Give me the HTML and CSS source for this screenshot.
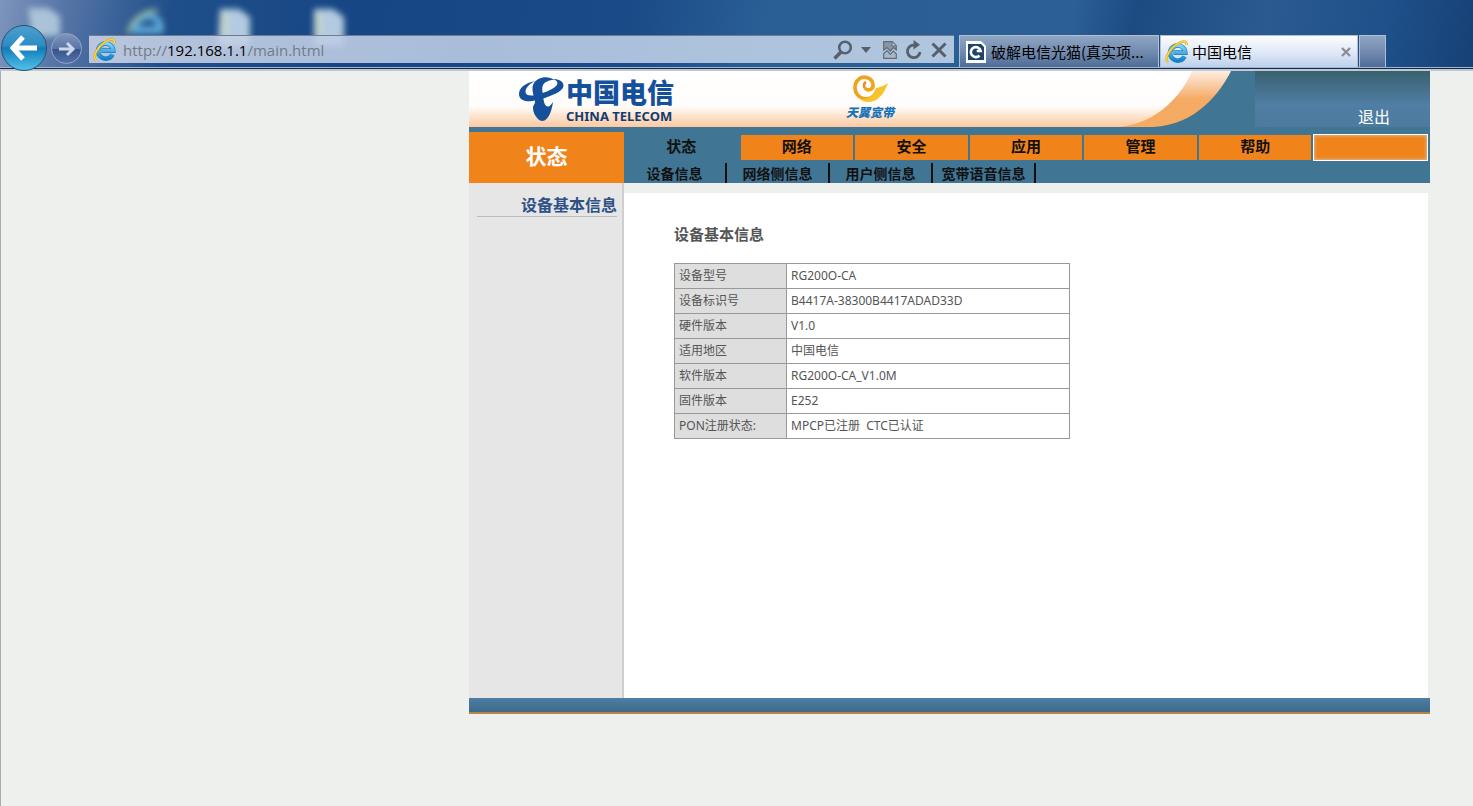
FILE: index.html
```html
<!DOCTYPE html>
<html lang="zh-CN">
<head>
<meta charset="utf-8">
<title>中国电信</title>
<link rel="stylesheet" href="styles.css">
</head>
<body>
<svg class="defs" width="0" height="0" aria-hidden="true">
  <defs>
    <linearGradient id="ie-blue" x1="0" y1="0" x2="0" y2="1"><stop offset="0" stop-color="#7fd6f7"/><stop offset="1" stop-color="#1583c9"/></linearGradient>
    <symbol id="ie" viewBox="0 0 24 24">
      <path d="M19.500 16.500A7.600 7.600 0 1 1 20.300 12.600H8.500" fill="none" stroke="#1b7fbf" stroke-width="4.600"/>
      <path d="M19.500 16.500A7.600 7.600 0 1 1 20.300 12.600H8.500" fill="none" stroke="url(#ie-blue)" stroke-width="3.200"/>
      <path d="M3 22.500C-1.500 18 6 6.500 15 2.500c4-1.800 7-1.500 6.500 2.500" fill="none" stroke="#d9a514" stroke-width="2.400"/>
      <path d="M3 22.500C-1.500 18 6 6.500 15 2.500c4-1.800 7-1.500 6.500 2.500" fill="none" stroke="#ffd84a" stroke-width="1.300"/>
    </symbol>
  </defs>
</svg>

<header class="browser">
  <svg class="desktop" viewBox="0 0 360 68" width="360" height="68" aria-hidden="true">
    <g class="soft">
      <path d="M28 8h20l12 8v20H32z" fill="#aac3d9"/>
      <path d="M220 9h19l11 8v29h-32z" fill="#b3cbe0"/>
      <path d="M314 9h19l11 8v29h-30z" fill="#b3cbe0"/>
      <path d="M220 12h8v24h-8zM314 12h8v24h-8z" fill="#c3d3cb"/>
      <path d="M160 30h-25a13 13 0 0 1 25-6z" fill="none" stroke="#62b3dd" stroke-width="6"/>
      <path d="M128 34c2-13 14-23 30-24" fill="none" stroke="#a9b98c" stroke-width="3"/>
    </g>
  </svg>
  <button class="back" aria-label="后退"><svg viewBox="0 0 28 28" width="28" height="28"><path d="M13 3L3 14l10 11M4 14h23" fill="none" stroke="#fff" stroke-width="5"/></svg></button>
  <button class="forward" aria-label="前进"><svg viewBox="0 0 18 18" width="18" height="18"><path d="M9 3l6 6-6 6M1 9h14" fill="none" stroke="#cbd6e8" stroke-width="3"/></svg></button>
  <div class="address">
    <svg width="24" height="24"><use href="#ie"/></svg>
    <div class="url">http://<b>192.168.1.1</b>/main.html</div>
    <div class="tools">
      <button aria-label="搜索"><svg width="20" height="20" viewBox="0 0 20 20"><circle cx="12" cy="7.500" r="5.800" fill="none" stroke="#56606c" stroke-width="2.600"/><path d="M8 12l-6.500 6.500" stroke="#56606c" stroke-width="3.600"/></svg></button>
      <button class="drop" aria-label="更多"><svg width="10" height="6" viewBox="0 0 10 6"><path d="M0 0h10L5 6z" fill="#56606c"/></svg></button>
      <button aria-label="兼容性视图"><svg width="14" height="18" viewBox="0 0 14 18"><path d="M.7.700h8.600l4 4V9l-3-2.500-3 3.500-3.300-3.500L.7 9z" fill="#8995a5" stroke="#626c78" stroke-width="1.200"/><path d="M9 1v4h4" fill="#b9c8da" stroke="#626c78"/><path d="M.7 17.300V12.500L4 9.500l3.300 3.800 3-3.300 3 3v4.300z" fill="#a9b9cc" stroke="#626c78" stroke-width="1.200"/></svg></button>
      <button aria-label="刷新"><svg width="18" height="20" viewBox="0 0 18 20"><path d="M10 5.200A6.300 6.300 0 1 0 15 12" fill="none" stroke="#56606c" stroke-width="2.800"/><path d="M8.500 0v9.500L15 4.800z" fill="#56606c"/></svg></button>
      <button aria-label="停止"><svg width="16" height="16" viewBox="0 0 16 16"><path d="M1.500 1.500l13 13M14.500 1.500l-13 13" stroke="#56606c" stroke-width="3"/></svg></button>
    </div>
  </div>
  <div class="tabs">
    <button class="tab">
      <svg width="22" height="24" viewBox="0 0 22 24"><path d="M1 1h15l5 5v17H1z" fill="#fff"/><path d="M3 4h13l3 3v13H3z" fill="#1f4467"/><path d="M14.500 15.500a5 5 0 1 1 1.200-4.500h-4" fill="none" stroke="#fff" stroke-width="2.600"/></svg>
      <span>破解电信光猫(真实项...</span>
    </button>
    <button class="tab current">
      <svg width="24" height="24"><use href="#ie"/></svg>
      <span>中国电信</span>
      <svg class="close" width="10" height="10" viewBox="0 0 10 10"><path d="M1 1l8 8M9 1L1 9" stroke="#8b8f95" stroke-width="2.400"/></svg>
    </button>
    <button class="tab blank" aria-label="新建选项卡"></button>
  </div>
</header>

<div class="viewport">
  <div class="site">
    <div class="banner">
      <div class="brand">
        <svg width="46" height="46" viewBox="0 0 46 46" role="img" aria-label="中国电信标志">
          <path d="M17 5C7 7 1 12 1 18c0 6 6 8 13 7 6-.8 12-2.500 18-5 8-3 13.500-6.500 13.500-10.500C45.500 5.500 41 3 35 3c4 1.500 6 4 3 7-4 4-12 7-20 9-6 1.300-10.500.5-10.500-3C7.500 12 11 8 17 5z" fill="#14509b"/>
          <path d="M36 4C33 1.500 28 .8 24 1.800 17 3.500 14.500 8 14.500 13c0 5 2 8 2.500 12 .4 3-2 4-2 7 0 4 2 8 5 11 2.500 2.500 6 2.500 8.500 0 3-3 5.500-9 6.500-17-2 3-3.500 5-5.500 4.500C26 29.500 25.500 24 25 19c-.5-4-1.500-7 0-10 1.500-3 6-5 11-5z" fill="#14509b"/>
        </svg>
        <div class="brand-text"><strong>中国电信</strong><span>CHINA TELECOM</span></div>
      </div>
      <div class="broadband">
        <svg width="40" height="29" viewBox="0 0 40 29" aria-hidden="true">
          <path d="M15 14c3 4 9 1 8-4C22 4 14 1 9 5c-6 5-5 14 1 18 7 4 15 1 19-8" fill="none" stroke="#efa41c" stroke-width="3.600"/>
          <path d="M26 14c4-1 8-2 12-5-3 8-7 15-14 18-5 2-11 1-14-2 7 1 13-3 16-11z" fill="#f7c32c"/>
          <path d="M15 14c-2-2-1-5 1-6" fill="none" stroke="#f08a24" stroke-width="2.600"/>
        </svg>
        <em>天翼宽带</em>
      </div>
      <svg class="swoosh" width="140" height="56" viewBox="0 0 140 56" aria-hidden="true">
        <defs>
          <linearGradient id="tail" x1="0" y1="0" x2="0" y2="1"><stop offset="0" stop-color="#fdeee2"/><stop offset=".5" stop-color="#f5aa66"/><stop offset="1" stop-color="#f6ab62"/></linearGradient>
          <linearGradient id="fade" x1="0" y1="0" x2="0" y2="1"><stop offset="0" stop-color="#fff"/><stop offset=".62" stop-color="#fffdfb"/><stop offset="1" stop-color="#fcc9a0"/></linearGradient>
        </defs>
        <path d="M0 0h140v56H0z" fill="#417594"/>
        <path d="M0 56V0h116C106 20 82 54 38 56z" fill="url(#tail)"/>
        <path d="M0 56V0h77C68 22 44 52 4 56z" fill="url(#fade)"/>
      </svg>
      <div class="exit"><a href="#">退出</a></div>
    </div>

    <div class="menu">
      <h1 class="section">状态</h1>
      <div class="menu-rows">
        <nav class="primary">
          <a class="active" href="#">状态</a>
          <a href="#">网络</a>
          <a href="#">安全</a>
          <a href="#">应用</a>
          <a href="#">管理</a>
          <a href="#">帮助</a>
          <a class="empty" href="#" aria-label="空"></a>
        </nav>
        <nav class="secondary">
          <a href="#">设备信息</a>
          <a href="#">网络侧信息</a>
          <a href="#">用户侧信息</a>
          <a href="#">宽带语音信息</a>
        </nav>
      </div>
    </div>

    <div class="body">
      <aside class="sidebar"><a href="#">设备基本信息</a></aside>
      <main class="content">
        <h2>设备基本信息</h2>
        <table>
          <tr><th scope="row">设备型号</th><td>RG200O-CA</td></tr>
          <tr><th scope="row">设备标识号</th><td>B4417A-38300B4417ADAD33D</td></tr>
          <tr><th scope="row">硬件版本</th><td>V1.0</td></tr>
          <tr><th scope="row">适用地区</th><td>中国电信</td></tr>
          <tr><th scope="row">软件版本</th><td>RG200O-CA_V1.0M</td></tr>
          <tr><th scope="row">固件版本</th><td>E252</td></tr>
          <tr><th scope="row">PON注册状态:</th><td>MPCP已注册&nbsp; CTC已认证</td></tr>
        </table>
      </main>
    </div>
    <footer class="footer"></footer>
  </div>
</div>
</body>
</html>
```
FILE: styles.css
```css
* {
  box-sizing: border-box;
}

body {
  margin: 0;
  min-height: 100vh;
  display: flex;
  flex-direction: column;
  background: #eef0ee;
  font-family: "Noto Sans", "Noto Sans CJK SC", sans-serif;
  font-size: 12px;
  color: #555;
}

a {
  color: inherit;
  text-decoration: none;
}

button {
  border: 0;
  padding: 0;
  margin: 0;
  background: none;
  font: inherit;
  color: inherit;
}

svg {
  display: block;
  flex: none;
}

.defs {
  position: absolute;
}

/* Browser frame */
.browser {
  position: relative;
  display: flex;
  align-items: flex-start;
  height: 71px;
  padding-top: 35px;
  background:
    linear-gradient(to bottom, transparent 67px, #9fb6d2 67px, #9fb6d2 68px, #10294f 68px, #10294f 69px, #c3c8cf 69px),
    linear-gradient(100deg, #7e95bd 0, #5877a8 60px, #1f4f8b 170px, #174684 350px, #1a4a87 620px, #2a5f96 760px, #2b5f95 1060px, #1c4b82 1120px, #2a5a90 1250px, #1f5089 1370px, #153f74 1473px);
}

.desktop {
  position: absolute;
  left: 0;
  top: 0;
}

.soft {
  filter: blur(3px);
}

.back,
.forward {
  position: relative;
  display: grid;
  place-items: center;
  flex: none;
  border-radius: 50%;
}

.back {
  width: 46px;
  height: 46px;
  margin: -10px 4px 0 1px;
  background: linear-gradient(#4c9fce 0, #2d8cc4 45%, #117bb8 50%, #4fc2ea 100%);
  border: 1px solid #27506f;
}

.forward {
  width: 31px;
  height: 31px;
  margin: -2px 7px 0 0;
  background: linear-gradient(#7f96bd 0, #5975a6 50%, #35548c 52%, #5373a8 100%);
  border: 1px solid #92a5c7;
}

.address {
  position: relative;
  flex: 1;
  display: flex;
  align-items: center;
  gap: 6px;
  height: 28px;
  padding: 0 7px 0 4px;
  background: linear-gradient(to right, rgba(205, 214, 232, .86), rgba(181, 199, 226, .92) 45%, #b0c6de);
  border-top: 1px solid #6d7c90;
}

.url {
  flex: 1;
  font-family: "Open Sans", sans-serif;
  font-size: 15px;
  line-height: 24px;
  color: #737b87;
}

.url b {
  font-weight: 400;
  color: #000;
}

.tools {
  display: flex;
  align-items: center;
  gap: 8px;
}

.drop {
  margin-right: 4px;
}

.tabs {
  display: flex;
  gap: 1px;
  width: 427px;
  margin: 0 87px 0 5px;
}

.tab {
  display: flex;
  align-items: center;
  gap: 4px;
  width: 200px;
  height: 32px;
  padding: 0 6px 0 5px;
  background: linear-gradient(#8fa5c3, #7089ad 55%, #4d6c98);
  border: 1px solid #b0bfd2;
  border-bottom: 0;
  font-family: "Noto Sans CJK SC", sans-serif;
  font-size: 15px;
  line-height: 24px;
  white-space: nowrap;
  color: #000;
}

.tab.current {
  width: 198px;
  gap: 3px;
  padding-left: 4px;
  background: linear-gradient(#fbfcfe, #dfe8f6 55%, #bdd0ec);
}

.tab.blank {
  width: 27px;
}

.close {
  margin-left: auto;
}

/* Page */
.viewport {
  flex: 1;
  display: flex;
  padding: 0 43px 92px 468px;
  border-left: 1px solid #a9adb2;
}

.site {
  flex: 1;
  display: flex;
  flex-direction: column;
}

.banner {
  display: flex;
  height: 56px;
  background: linear-gradient(#fff 0, #fffdfb 62%, #fcc9a0 100%);
}

.brand {
  display: flex;
  gap: 2px;
  padding: 5px 0 0 49px;
}

.brand-text {
  display: flex;
  flex-direction: column;
}

.brand-text strong {
  font: 900 27px/32px "Noto Sans CJK SC", sans-serif;
  color: #14509b;
}

.brand-text span {
  font: 700 13px/16px "Noto Sans", sans-serif;
  color: #123c70;
}

.broadband {
  display: flex;
  flex-direction: column;
  align-items: center;
  margin: 3px auto 0 172px;
}

.broadband em {
  font: italic 900 12px/18px "Noto Sans CJK SC", sans-serif;
  color: #1672b8;
}

.exit {
  width: 175px;
  padding: 34px 40px 0 0;
  text-align: right;
  font: 16px/22px "Noto Sans CJK SC", sans-serif;
  color: #fff;
  background: linear-gradient(#38616f, #507ea4 60%, #4c7b9e);
}

.menu {
  display: flex;
  height: 56px;
  padding-top: 5px;
  background: #417594;
}

.section {
  width: 155px;
  margin: 0;
  text-align: center;
  font: 700 21px/46px "Noto Sans CJK SC", sans-serif;
  color: #fff;
  background: #f0841b;
}

.menu-rows {
  flex: 1;
  display: flex;
  flex-direction: column;
  gap: 3px;
  padding: 3px 2px 0 0;
  font-family: "Noto Sans CJK SC", sans-serif;
  font-weight: 700;
  color: #111;
}

.primary {
  display: flex;
  gap: 2px;
  height: 25px;
  font-size: 15px;
  line-height: 22px;
  text-align: center;
}

.primary a {
  flex: 1;
  background: #f0841b;
}

.primary .active {
  flex: 1 0 2px;
  background: none;
}

.primary .empty {
  margin: -1px 0;
  border: 1px solid #fff;
  box-shadow: inset 0 0 3px 1px #d9b38c;
}

.secondary {
  display: flex;
  height: 20px;
  font-size: 14px;
  line-height: 20px;
  text-align: center;
}

.secondary a {
  width: 103px;
  white-space: nowrap;
  border-right: 2px solid #111;
}

.body {
  flex: 1;
  display: flex;
}

.sidebar {
  width: 155px;
  padding: 10px 5px 0 8px;
  background: #e6e6e6;
  border-right: 2px solid #cfcfcf;
}

.sidebar a {
  display: block;
  text-align: right;
  font: 700 16px/23px "Noto Sans CJK SC", sans-serif;
  color: #2e5287;
  border-bottom: 1px solid #bdbdbd;
}

.content {
  flex: 1;
  margin: 10px 2px 0 0;
  padding: 30px 50px;
  background: #fff;
}

.content h2 {
  margin: 0 0 18px;
  font: 700 15px/22px "Noto Sans CJK SC", sans-serif;
}

table {
  width: 396px;
  border-collapse: collapse;
}

th,
td {
  height: 25px;
  padding: 0 4px;
  border: 1px solid #999;
  line-height: 20px;
  text-align: left;
  font-weight: 400;
}

th {
  width: 112px;
  background: #dedede;
}

.footer {
  height: 16px;
  background: linear-gradient(#507ea4, #3c6a89);
  border-bottom: 2px solid #b98247;
}
```
